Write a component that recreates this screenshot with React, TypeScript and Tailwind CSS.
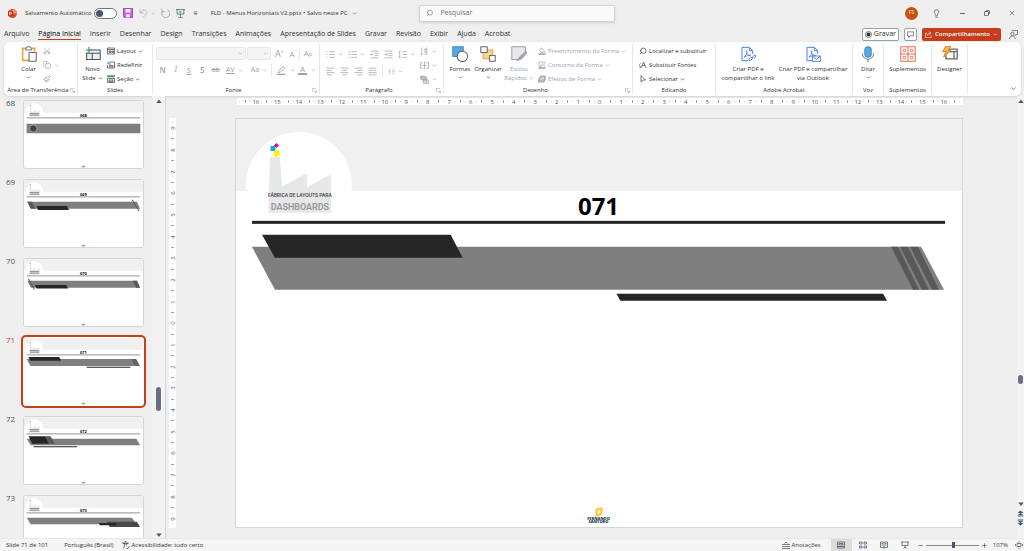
import { type ReactNode } from "react";
import {
  ChevronDown,
  Copy,
  Lightbulb,
  Minus,
  Paintbrush,
  Scissors,
  Search,
  X,
} from "lucide-react";
import clsx from "clsx";

type IconProps = { children: ReactNode; className?: string; box?: number };

// Base for the small drawn icons (16 unit grid by default)
function Icon({ children, className = "size-2", box = 16 }: IconProps) {
  return (
    <svg
      viewBox={`0 0 ${box} ${box}`}
      fill="none"
      stroke="currentColor"
      strokeWidth="1.3"
      aria-hidden="true"
      className={clsx("shrink-0", className)}
    >
      {children}
    </svg>
  );
}

function Chevron({ className }: { className?: string }) {
  return (
    <ChevronDown
      className={clsx("size-[5px] shrink-0", className)}
      strokeWidth={3}
    />
  );
}

function Launcher() {
  return (
    <button type="button" aria-label="Mais opções" className="text-gray-500">
      <Icon className="size-[5px]">
        <path d="M1 13V1h12M6 6l8 8M14 8v6H8" />
      </Icon>
    </button>
  );
}

/* ---------- Slides ---------- */

type Shape = { points: string; fill: string };
type Slide = { number: number; shapes: Shape[]; dot?: boolean };

const GRAY = "#7f7f7f";
const DARK = "#262626";
const MID = "#595959";

const slides: Slide[] = [
  {
    number: 68,
    dot: true,
    shapes: [{ points: "16,139 711,139 711,197 16,197", fill: GRAY }],
  },
  {
    number: 69,
    shapes: [
      { points: "20,133 690,133 709,176 42,176", fill: GRAY },
      { points: "20,133 48,133 70,176 42,176", fill: MID },
      { points: "75,159 262,159 275,184 86,184", fill: DARK },
      { points: "658,120 665,120 706,190 699,190", fill: MID },
    ],
  },
  {
    number: 70,
    shapes: [
      { points: "20,133 690,133 709,176 42,176", fill: GRAY },
      { points: "664,133 690,133 709,176 686,176", fill: MID },
      { points: "67,159 258,159 270,180 76,180", fill: DARK },
      { points: "24,120 31,120 66,187 59,187", fill: MID },
    ],
  },
  {
    number: 71,
    shapes: [
      { points: "16,128 686,128 709,171 39,171", fill: GRAY },
      { points: "656,128 663,128 684,171 678,171", fill: MID },
      { points: "665,128 673,128 694,171 687,171", fill: MID },
      { points: "675,128 683,128 704,171 697,171", fill: MID },
      { points: "26,116 215,116 227,139 39,139", fill: DARK },
      { points: "381,175 648,175 652,182 385,182", fill: DARK },
    ],
  },
  {
    number: 72,
    shapes: [
      { points: "17,133 687,133 709,173 40,173", fill: GRAY },
      { points: "130,118 162,118 188,163 152,163", fill: MID },
      { points: "28,118 130,118 152,163 50,163", fill: DARK },
      { points: "57,178 322,178 327,185 61,185", fill: DARK },
    ],
  },
  {
    number: 73,
    shapes: [
      { points: "17,133 660,133 686,173 40,173", fill: GRAY },
      { points: "506,158 690,158 709,190 524,190", fill: "#4a4a4a" },
      { points: "457,165 560,165 567,178 463,178", fill: DARK },
    ],
  },
];

function SlideArt({ slide, thumb }: { slide: Slide; thumb?: boolean }) {
  return (
    <svg
      viewBox="0 0 727 409"
      className="block w-full bg-white"
      role="img"
      aria-label={`Slide ${slide.number}`}
    >
      <rect width="727" height="72" fill="#f0f0f0" />
      <circle cx="63" cy="66" r="53" fill="#fff" />

      {/* fábrica */}
      <path
        d="M34 38h10l2 30 25-14v14.500l24-13.500V94H32.500z"
        fill="#e6e7e8"
      />
      <rect x="34.500" y="27" width="5" height="5" fill="#00aeef" />
      <path d="M40.500 24l2.500 2.500-2.500 2.500-2.500-2.500z" fill="#ec008c" />
      <path d="M39 31l4 1 1 4-4 2.500-3-3.500z" fill="#fff200" />
      {thumb ? (
        <>
          <path d="M35 77h58" stroke="#777" strokeWidth="5" />
          <path d="M35 87h58" stroke="#aaa" strokeWidth="9" />
        </>
      ) : (
        <>
          <text
            x="64"
            y="78"
            textAnchor="middle"
            fill="#414042"
            className="font-['Roboto',sans-serif] text-[5px] font-medium"
          >
            FÁBRICA DE LAYOUTS PARA
          </text>
          <text
            x="64"
            y="91"
            textAnchor="middle"
            fill="#939598"
            className="font-['Roboto',sans-serif] text-[9px] font-semibold"
          >
            DASHBOARDS
          </text>
        </>
      )}

      <text
        x="363"
        y="96"
        textAnchor="middle"
        fill="#000"
        className="font-['Open_Sans',sans-serif] text-[24px] font-bold"
      >
        {String(slide.number).padStart(3, "0")}
      </text>
      <rect x="16" y="102" width="694" height="3" fill={DARK} />

      {slide.shapes.map((shape) => (
        <polygon key={shape.points} points={shape.points} fill={shape.fill} />
      ))}
      {slide.dot && (
        <circle cx="57" cy="168" r="22" fill="#404040" stroke="#bfbfbf" strokeWidth="4" />
      )}

      {/* rodapé */}
      <path d="M361 392q0-2 5-2v3q0 4-5 4z" fill="#fff3c4" stroke="#fdc52f" strokeWidth="2" />
      {thumb ? (
        <path d="M352 402h22" stroke="#6b8795" strokeWidth="7" />
      ) : (
        <>
          <text
            x="363"
            y="402"
            textAnchor="middle"
            fill="#1d4257"
            className="font-['Open_Sans',sans-serif] text-[4px] font-extrabold"
          >
            FERNANDO
          </text>
          <text
            x="363"
            y="405"
            textAnchor="middle"
            fill="#1d4257"
            className="font-['Open_Sans',sans-serif] text-[4px] font-extrabold"
          >
            SANTORO
          </text>
        </>
      )}
    </svg>
  );
}

/* ---------- Title bar ---------- */

function TitleBar() {
  return (
    <header className="grid h-[26px] grid-cols-[419fr_196fr_409fr] items-center">
      <div className="flex items-center pl-2 whitespace-nowrap">
        <Icon className="size-[9px]">
          <circle cx="8" cy="8" r="8" fill="#d35230" stroke="none" />
          <path d="M8 0a8 8 0 018 8H8z" fill="#ff8f6b" stroke="none" />
          <rect x="0" y="4" width="9" height="9" rx="1" fill="#b7351a" stroke="none" />
          <path d="M3 11V6h2a1.500 1.500 0 010 3H3" stroke="#fff" />
        </Icon>
        <label className="ml-2 flex items-center gap-[2px] text-[6px]">
          Salvamento Automático
          <input type="checkbox" role="switch" className="peer sr-only" />
          <span className="flex h-[11px] w-[23px] items-center rounded-full border border-gray-500 bg-white px-px">
            <span className="size-[7px] rounded-full bg-gray-600" />
          </span>
        </label>
        <button type="button" aria-label="Salvar" className="ml-[6px] text-[#b14fc5]">
          <Icon className="size-[10px]">
            <path d="M1 1h14v14H3l-2-2z" fill="#c56fd5" strokeWidth="2" />
            <path d="M4 1.500h8V7H4zM5 10h6v5H5z" fill="#f6e8f8" stroke="none" />
          </Icon>
        </button>
        <button type="button" aria-label="Desfazer" className="ml-[6px] flex items-center gap-[3px] text-gray-400">
          <Icon className="size-[9px]">
            <path d="M2 1v6h6M2 7l4-4c3-3 8-1 8 3 0 2-1 3-7 9" />
          </Icon>
          <Chevron />
        </button>
        <button type="button" aria-label="Refazer" className="ml-1 text-gray-400">
          <Icon className="size-[10px]">
            <path d="M3 1v5h5M4 5A6.500 6.500 0 1012 3" />
          </Icon>
        </button>
        <button type="button" aria-label="Apresentar" className="ml-[6px] text-gray-600">
          <Icon className="size-[9px]">
            <path d="M0 1h16M2 1v8h12V1M8 9v5M4 15h8" />
            <path d="M6 3l5 2-5 3z" fill="#4caf72" stroke="none" />
          </Icon>
        </button>
        <button type="button" aria-label="Personalizar" className="ml-2 text-gray-600">
          <Icon className="size-[5px]">
            <path d="M2 3h12M3 8h10l-5 5z" strokeWidth="2" />
          </Icon>
        </button>
        <button type="button" className="ml-[13px] flex items-center gap-1 text-[6px]">
          FLD - Menus Horizontais V2.pptx • Salvo neste PC
          <Chevron className="text-gray-600" />
        </button>
      </div>

      <label className="flex h-[17px] items-center gap-[7px] rounded-xs border border-gray-300 bg-[#fafafa] px-[6px] shadow-sm">
        <Search className="size-2 -scale-x-100 text-gray-500" />
        <input
          type="search"
          aria-label="Pesquisar"
          placeholder="Pesquisar"
          className="w-full min-w-0 bg-transparent text-[7px] outline-none placeholder:text-gray-500"
        />
      </label>

      <div className="flex items-center justify-end pr-2">
        <button type="button" className="size-[13px] rounded-full bg-[#ca5010] text-[5px] text-orange-100">
          FS
        </button>
        <button type="button" aria-label="Dicas" className="ml-[14px] text-gray-600">
          <Lightbulb className="size-[9px]" />
        </button>
        <button type="button" aria-label="Minimizar" className="ml-[18px] text-gray-600">
          <Minus className="size-[7px]" strokeWidth={3} />
        </button>
        <button type="button" aria-label="Restaurar" className="ml-[18px] text-gray-700">
          <Icon className="size-[6px]">
            <rect x="1" y="4" width="11" height="11" rx="2" strokeWidth="2" />
            <path d="M5 1h7q3 0 3 3v7" strokeWidth="2" />
          </Icon>
        </button>
        <button type="button" aria-label="Fechar" className="ml-[18px] text-gray-600">
          <X className="size-2" />
        </button>
      </div>
    </header>
  );
}

const tabs = [
  "Arquivo",
  "Página Inicial",
  "Inserir",
  "Desenhar",
  "Design",
  "Transições",
  "Animações",
  "Apresentação de Slides",
  "Gravar",
  "Revisão",
  "Exibir",
  "Ajuda",
  "Acrobat",
];

function TabBar() {
  return (
    <nav className="flex h-4 items-center justify-between pr-[6px] pl-1 text-[7px]">
      <div className="flex gap-[9px]">
        {tabs.map((tab) => (
          <button
            key={tab}
            type="button"
            className={clsx(
              "border-b leading-[10px] whitespace-nowrap",
              tab === "Página Inicial"
                ? "border-[#c43e1c] font-medium text-black"
                : "border-transparent",
            )}
          >
            {tab}
          </button>
        ))}
      </div>
      <div className="flex items-center gap-[5px]">
        <button type="button" className="flex h-[13px] items-center gap-[2px] rounded-xs border border-gray-400 bg-white px-[2px]">
          <Icon className="size-[7px]">
            <circle cx="8" cy="8" r="7" />
            <circle cx="8" cy="8" r="4" fill="currentColor" />
          </Icon>
          Gravar
        </button>
        <button type="button" aria-label="Comentários" className="flex h-[13px] w-[13px] items-center justify-center rounded-xs border border-gray-400 bg-white">
          <Icon className="size-[7px]">
            <path d="M1 2h14v9H7l-3 4v-4H1z" />
          </Icon>
        </button>
        <button type="button" className="flex h-[13px] items-center gap-[3px] rounded-xs bg-[#c43e1c] px-[3px] text-[6px] font-semibold text-white">
          <Icon className="size-[7px]">
            <path d="M5 5H1v10h13v-5M5 11c0-4 3-6 7-6M9 1l5 4-5 4" />
          </Icon>
          Compartilhamento
          <Chevron />
        </button>
        <button type="button" aria-label="Comentar" className="ml-[3px] text-gray-600">
          <Icon className="size-[9px]">
            <circle cx="6" cy="7" r="3" />
            <path d="M1 16c0-7 10-7 10 0M5 1h10v7h-2l-2 2V8" />
          </Icon>
        </button>
      </div>
    </nav>
  );
}

/* ---------- Ribbon ---------- */

type GroupProps = {
  label: string;
  width: string;
  launcher?: boolean;
  children: ReactNode;
};

function Group({ label, width, launcher, children }: GroupProps) {
  return (
    <section className={clsx("flex shrink-0 flex-col border-r border-gray-200", width)}>
      <div className="flex flex-1 items-start">{children}</div>
      <div className="flex h-2 items-center justify-end px-[2px] text-[6px]">
        <span className="flex-1 text-center leading-2 whitespace-nowrap">{label}</span>
        {launcher && <Launcher />}
      </div>
    </section>
  );
}

type BigButtonProps = {
  icon: ReactNode;
  lines: string[];
  chevron?: "below" | "inline";
  disabled?: boolean;
  className?: string;
};

function BigButton({ icon, lines, chevron, disabled, className }: BigButtonProps) {
  return (
    <button
      type="button"
      disabled={disabled}
      className={clsx(
        "flex flex-col items-center text-[6px] leading-[9px] whitespace-nowrap",
        disabled && "text-gray-400",
        className,
      )}
    >
      <span className="mt-px mb-[3px] flex h-[17px] items-center">{icon}</span>
      {lines.map((line, i) => (
        <span key={line} className="flex items-center gap-[2px]">
          {line}
          {chevron === "inline" && i === lines.length - 1 && <Chevron />}
        </span>
      ))}
      {chevron === "below" && <Chevron className="mt-px" />}
    </button>
  );
}

type RowButtonProps = {
  icon: ReactNode;
  label: string;
  chevron?: boolean;
  disabled?: boolean;
};

function RowButton({ icon, label, chevron, disabled }: RowButtonProps) {
  return (
    <button
      type="button"
      disabled={disabled}
      className={clsx(
        "flex h-[14px] items-center gap-[2px] text-[6px] whitespace-nowrap",
        disabled && "text-gray-400",
      )}
    >
      {icon}
      {label}
      {chevron && <Chevron />}
    </button>
  );
}

function IconButton({
  label,
  chevron,
  children,
}: {
  label: string;
  chevron?: boolean;
  children: ReactNode;
}) {
  return (
    <button type="button" disabled aria-label={label} className="flex h-[14px] items-center justify-center gap-[3px]">
      {children}
      {chevron && <Chevron />}
    </button>
  );
}

function Lines({ d }: { d: string }) {
  return (
    <Icon className="size-[9px]">
      <path d={d} />
    </Icon>
  );
}

function PdfIcon({ mail }: { mail?: boolean }) {
  return (
    <Icon className="size-4 text-[#4c82ec]" box={24}>
      <path d="M12 22H3V2h11l5 5v5M14 2v5h5" strokeWidth="1.5" />
      <path d="M6 17c3-2 5-7 4-10-2 3 2 7 6 7-4 0-7 1-10 3z" strokeWidth="1.3" />
      {mail ? (
        <path d="M11 15h12v8H11zl6 5 6-5" fill="#fff" strokeWidth="1.5" />
      ) : (
        <path d="M13 20l3-3q2-1 3 1l-3 4q-3 1-3-2zM18 18l3-4q2-1 3 1l-3 4" strokeWidth="1.5" />
      )}
    </Icon>
  );
}

function FontGroup() {
  return (
    <Group label="Fonte" width="w-[167px]" launcher>
      <div className="w-full px-[3px] pt-[3px] text-gray-400">
        <div className="flex items-center">
          <select disabled aria-label="Fonte" className="h-[13px] w-[90px] appearance-none rounded-xs border border-gray-200 bg-gray-100" />
          <Chevron className="-ml-2" />
          <select disabled aria-label="Tamanho" className="ml-1 h-[13px] w-6 appearance-none rounded-xs border border-gray-200 bg-gray-100" />
          <Chevron className="-ml-2" />
          <button type="button" disabled className="ml-[7px] text-[9px] leading-3">
            A<sup className="text-[5px]">^</sup>
          </button>
          <button type="button" disabled className="ml-[6px] text-[8px] leading-3">
            A<sup className="text-[5px]">ˇ</sup>
          </button>
          <span className="ml-[2px] h-3 w-px bg-gray-200" />
          <button type="button" disabled className="ml-1 text-[8px] leading-3">
            A<span className="text-[6px]">ρ</span>
          </button>
        </div>
        <div className="mt-[3px] flex h-[14px] items-center text-[8px]">
          <button type="button" disabled className="w-[14px] font-semibold">N</button>
          <button type="button" disabled className="w-[14px] font-serif italic">I</button>
          <button type="button" disabled className="w-[14px] underline">S</button>
          <button type="button" disabled className="w-[14px] font-semibold">S</button>
          <button type="button" disabled className="w-[14px] text-[7px] line-through">ab</button>
          <button type="button" disabled className="ml-1 flex items-center gap-[3px] text-[7px] underline">
            AV
            <Chevron />
          </button>
          <button type="button" disabled className="ml-2 flex items-center gap-[3px] text-[7px]">
            Aa
            <Chevron />
          </button>
          <span className="ml-1 h-3 w-px bg-gray-200" />
          <button type="button" disabled aria-label="Realce" className="ml-1 flex items-center gap-1">
            <Icon className="size-[10px]">
              <path d="M4 10l7-8 3 3-8 7H3z" />
              <path d="M1 15h14" strokeWidth="2" />
            </Icon>
            <Chevron />
          </button>
          <button type="button" disabled className="ml-[3px] flex items-center gap-1">
            <span className="w-[9px] border-b-2 border-gray-400 text-center leading-2">A</span>
            <Chevron />
          </button>
        </div>
      </div>
    </Group>
  );
}

function ParagraphGroup() {
  return (
    <Group label="Parágrafo" width="w-[124px]" launcher>
      <div className="flex w-full justify-between pr-[6px] pl-[6px] text-gray-400">
        <div className="pt-[3px]">
          <div className="flex items-center gap-[5px]">
            <IconButton label="Marcadores" chevron>
              <Lines d="M1 3h2M6 3h10M1 8h2M6 8h10M1 13h2M6 13h10" />
            </IconButton>
            <IconButton label="Numeração" chevron>
              <Lines d="M2 1v4M6 3h10M1 8h3M6 8h10M1 13h3M6 13h10" />
            </IconButton>
            <IconButton label="Diminuir recuo">
              <Lines d="M1 2h14M8 6h7M8 10h7M1 14h14M6 8H1M3 6L1 8l2 2" />
            </IconButton>
            <IconButton label="Aumentar recuo">
              <Lines d="M1 2h14M8 6h7M8 10h7M1 14h14M1 8h5M4 6l2 2-2 2" />
            </IconButton>
            <IconButton label="Espaçamento" chevron>
              <Lines d="M3 2v12M1 4l2-2 2 2M1 12l2 2 2-2M8 3h8M8 8h8M8 13h8" />
            </IconButton>
          </div>
          <div className="mt-[3px] flex items-center gap-[5px]">
            <IconButton label="Esquerda">
              <Lines d="M1 2h14M1 6h9M1 10h14M1 14h9" />
            </IconButton>
            <IconButton label="Centro">
              <Lines d="M1 2h14M4 6h8M1 10h14M4 14h8" />
            </IconButton>
            <IconButton label="Direita">
              <Lines d="M1 2h14M6 6h9M1 10h14M6 14h9" />
            </IconButton>
            <IconButton label="Justificar">
              <Lines d="M1 2h14M1 6h14M1 10h14M1 14h14" />
            </IconButton>
            <span className="h-3 w-px bg-gray-200" />
            <IconButton label="Colunas" chevron>
              <Icon className="size-[7px]">
                <path d="M1 4h5M1 8h5M1 12h5M10 4h5M10 8h5M10 12h5" />
              </Icon>
            </IconButton>
          </div>
        </div>
        <div>
          <IconButton label="Direção do texto" chevron>
            <Lines d="M3 1v13M1 12l2 2 2-2M9 14V3M12 1v13M7 5l2-2 2 2" />
          </IconButton>
          <IconButton label="Alinhar texto" chevron>
            <Lines d="M5 3H1v10h4M11 3h4v10h-4M8 1v14M4 8h8" />
          </IconButton>
          <IconButton label="SmartArt" chevron>
            <Icon className="size-[9px]">
              <path d="M1 2h8l3 3v4H4L1 7z" fill="#bbb" />
              <path d="M6 9h9v6H6zM8 11h5M8 13h5" />
            </Icon>
          </IconButton>
        </div>
      </div>
    </Group>
  );
}

function Ribbon() {
  return (
    <div className="mr-[3px] ml-1 flex h-[54px] rounded-md bg-white py-[2px] shadow-sm">
      <Group label="Área de Transferência" width="w-[74px]" launcher>
        <BigButton
          className="w-[49px]"
          lines={["Colar"]}
          chevron="below"
          icon={
            <Icon className="size-4" box={20}>
              <path d="M6 3H2v15h8M13 3h4v4" stroke="#e8a33d" strokeWidth="2" />
              <path d="M6 5V3l2-2h3l2 2v2z" stroke="#777" fill="#fff" />
              <path d="M10 8h9v11h-9z" stroke="#666" fill="#fff" />
            </Icon>
          }
        />
        <div className="-ml-[10px] text-gray-400">
          <IconButton label="Recortar">
            <Scissors className="size-2 -rotate-90" />
          </IconButton>
          <IconButton label="Copiar" chevron>
            <Copy className="size-2" />
          </IconButton>
          <IconButton label="Pincel de formatação">
            <Paintbrush className="size-2" />
          </IconButton>
        </div>
      </Group>

      <Group label="Slides" width="w-[75px]">
        <BigButton
          className="w-[29px]"
          lines={["Novo", "Slide"]}
          chevron="inline"
          icon={
            <Icon className="size-4 text-gray-600" box={20}>
              <path d="M3 5h16v12H2V8M2 9h17M9 9v8" fill="#eee" />
              <path d="M5 1v8M1 5h8" stroke="#43a668" strokeWidth="1.5" />
            </Icon>
          }
        />
        <div>
          <RowButton
            label="Layout"
            chevron
            icon={
              <Icon>
                <path d="M1 2h14v12H1zM1 5h14M4 8h4v3H4zM10 8h3v3h-3z" />
              </Icon>
            }
          />
          <RowButton
            label="Redefinir"
            icon={
              <Icon>
                <path d="M6 2h9v12H1V8M5 9h7v3H5z" />
                <path d="M4 1L1 4l3 3M1 4h5v4" stroke="#2b88d8" strokeWidth="1.600" />
              </Icon>
            }
          />
          <RowButton
            label="Seção"
            chevron
            icon={
              <Icon>
                <path d="M1 1h14v3H1z" fill="#43a668" stroke="#43a668" />
                <path d="M1 7h14v8H1zM4 10h8v3H4z" />
              </Icon>
            }
          />
        </div>
      </Group>

      <FontGroup />
      <ParagraphGroup />

      <Group label="Desenho" width="w-[189px]" launcher>
        <BigButton
          className="w-8"
          lines={["Formas"]}
          chevron="below"
          icon={
            <Icon className="size-4" box={20}>
              <path d="M1 1h13v12H1z" fill="#5ba7e5" stroke="#3b8ad0" />
              <circle cx="13" cy="13" r="6.500" fill="#fff" stroke="#666" />
            </Icon>
          }
        />
        <BigButton
          className="w-6"
          lines={["Organizar"]}
          chevron="below"
          icon={
            <Icon className="size-4" box={20}>
              <path d="M4 5h12v11H4z" fill="#fbd78b" stroke="#e8a33d" />
              <path d="M1 1h8v7H1zM12 12h7v7h-7z" fill="#fff" stroke="#666" />
            </Icon>
          }
        />
        <BigButton
          className="w-[38px]"
          lines={["Estilos", "Rápidos"]}
          chevron="inline"
          disabled
          icon={
            <Icon className="size-4" box={20}>
              <path d="M1 1h17v7l-8 9H1z" fill="#e8e8e8" />
              <path d="M19 6l-8 8-3 4 5-2 7-8" fill="#aaa" />
            </Icon>
          }
        />
        <div>
          <RowButton
            label="Preenchimento da Forma"
            chevron
            disabled
            icon={
              <Icon>
                <path d="M7 2l6 6-5 4-5-5zM7 1v4M13 8l2 4" />
                <path d="M1 14h14" strokeWidth="3" />
              </Icon>
            }
          />
          <RowButton
            label="Contorno da Forma"
            chevron
            disabled
            icon={
              <Icon>
                <path d="M10 2H2v9h3M5 11l1-3 7-7 2 2-7 7zM13 7v4" />
                <path d="M1 14h14" strokeWidth="3" />
              </Icon>
            }
          />
          <RowButton
            label="Efeitos de Forma"
            chevron
            disabled
            icon={
              <Icon>
                <path d="M5 2h10l-3 8H1zM1 10v4h11l3-8" fill="#ccc" strokeWidth="2" />
              </Icon>
            }
          />
        </div>
      </Group>

      <Group label="Editando" width="w-[83px]">
        <div className="pl-[6px]">
          <RowButton
            label="Localizar e substituir"
            icon={<Search className="size-2 -scale-x-100" />}
          />
          <RowButton
            label="Substituir Fontes"
            icon={
              <Icon>
                <path d="M5 12l4-10 5 12M7 9h5" />
                <path d="M4 4C0 6 0 11 4 13M1 13h3v-3" stroke="#2b88d8" strokeWidth="1.600" />
              </Icon>
            }
          />
          <RowButton
            label="Selecionar"
            chevron
            icon={
              <Icon>
                <path d="M4 1v13l4-4h5z" />
              </Icon>
            }
          />
        </div>
      </Group>

      <Group label="Adobe Acrobat" width="w-[137px]">
        <BigButton
          className="w-16"
          lines={["Criar PDF e", "compartilhar o link"]}
          icon={<PdfIcon />}
        />
        <BigButton
          className="w-[66px]"
          lines={["Criar PDF e compartilhar", "via Outlook"]}
          icon={<PdfIcon mail />}
        />
      </Group>

      <Group label="Voz" width="w-[31px]">
        <BigButton
          className="w-full"
          lines={["Ditar"]}
          chevron="below"
          icon={
            <Icon className="size-4" box={20}>
              <rect x="6" y="1" width="8" height="13" rx="4" fill="#5ba7e5" stroke="#3b8ad0" />
              <path d="M3 9c0 10 14 10 14 0M10 16v4" stroke="#777" />
            </Icon>
          }
        />
      </Group>

      <Group label="Suplementos" width="w-[48px]">
        <BigButton
          className="w-full"
          lines={["Suplementos"]}
          icon={
            <Icon className="size-4 text-[#e0704f]" box={20}>
              <path d="M1 1h18v18H1zM10 1v18M1 10h18" />
              <path d="M4 4h3v3H4zM13 4h3v3h-3zM4 13h3v3H4zM13 13h3v3h-3z" strokeWidth="1" />
            </Icon>
          }
        />
      </Group>

      <Group label="" width="w-[36px]">
        <BigButton
          className="w-full"
          lines={["Designer"]}
          icon={
            <Icon className="size-4" box={20}>
              <path d="M6 4h13v12H5v-4M6 7h13M15 7v9" stroke="#666" strokeWidth="1.600" />
              <path d="M5 0h6L8 5h3l-9 9 3-7H1z" fill="#f9b84a" stroke="#d9822b" />
            </Icon>
          }
        />
      </Group>

      <button type="button" aria-label="Recolher faixa" className="mr-1 mb-[2px] ml-auto self-end">
        <ChevronDown className="size-[7px]" />
      </button>
    </div>
  );
}

/* ---------- Rulers ---------- */

// Quarter marks between numbers: dot, tick, dot
function rulerMarks(max: number, edge: string[]) {
  const marks: string[] = [...edge];
  for (let n = -max; n <= max; n++) {
    marks.push(String(Math.abs(n)));
    if (n < max) marks.push(".", "|", ".");
  }
  return [...marks, ...edge];
}

function Ruler({ vertical }: { vertical?: boolean }) {
  const marks = vertical ? rulerMarks(9, ["."]) : rulerMarks(16, [".", "|", "."]);
  return (
    <div
      className={clsx(
        "flex bg-white text-[6px] leading-none text-gray-600",
        vertical ? "w-[7px] flex-col py-[2px]" : "h-[7px] w-full",
      )}
    >
      {marks.map((mark, i) => (
        <span key={i} className="flex min-h-0 min-w-0 flex-1 items-center justify-center">
          {mark === "." && <span className="size-px bg-gray-300" />}
          {mark === "|" && (
            <span className={clsx("bg-gray-400", vertical ? "h-px w-[3px]" : "h-[3px] w-px")} />
          )}
          {mark !== "." && mark !== "|" && (
            <span className={clsx(vertical && "-rotate-90")}>{mark}</span>
          )}
        </span>
      ))}
    </div>
  );
}

function Triangle({ down }: { down?: boolean }) {
  return (
    <Icon className="size-[6px] text-gray-600">
      <path d={down ? "M1 4h14l-7 9z" : "M1 13h14L8 4z"} fill="currentColor" stroke="none" />
    </Icon>
  );
}

function DoubleTriangle({ down }: { down?: boolean }) {
  return (
    <Icon className="size-[7px] text-gray-600">
      <path
        d={down ? "M2 1h12v2H2zM1 4h14l-7 5zM1 9h14l-7 6z" : "M1 7h14L8 1zM1 12h14L8 7zM2 13h12v2H2z"}
        fill="currentColor"
        stroke="none"
      />
    </Icon>
  );
}

/* ---------- Panels ---------- */

function ThumbnailPanel({ current }: { current: number }) {
  return (
    <aside className="flex w-[166px] shrink-0 border-r border-gray-300">
      <ol className="flex-1 overflow-hidden pt-1">
        {slides.map((slide) => {
          const active = slide.number === current;
          return (
            <li key={slide.number} className="flex h-[79px] items-start">
              <span
                className={clsx(
                  "w-[23px] pl-[6px] text-[8px] leading-[5px]",
                  active ? "text-[#c43e1c]" : "text-gray-600",
                )}
              >
                {slide.number}
              </span>
              <button
                type="button"
                className={clsx(
                  "w-[121px] overflow-hidden rounded-[3px] border",
                  active
                    ? "border-white outline-2 outline-[#c43e1c]"
                    : "border-gray-300",
                )}
              >
                <SlideArt slide={slide} thumb />
              </button>
            </li>
          );
        })}
      </ol>
      <div className="flex w-[13px] flex-col items-center bg-[#f3f3f3] pt-[2px]">
        <Triangle />
        <div className="flex-[281]" />
        <div className="h-6 w-[5px] rounded-full bg-gray-500" />
        <div className="flex-[120]" />
        <Triangle down />
      </div>
    </aside>
  );
}

function Editor({ slide }: { slide: Slide }) {
  return (
    <main className="flex min-w-0 flex-1">
      <div className="min-w-0 flex-1 pl-[3px]">
        <div className="pt-[2px] pr-[54px] pl-[68px]">
          <Ruler />
        </div>
        <div className="flex pt-[13px] pr-[54px]">
          <Ruler vertical />
          <div className="ml-[59px] min-w-0 flex-1 border border-gray-300">
            <SlideArt slide={slide} />
          </div>
        </div>
      </div>
      <div className="flex w-[7px] flex-col items-center bg-[#f3f3f3] pt-[2px] pb-3">
        <Triangle />
        <div className="flex-[271]" />
        <div className="h-[9px] w-[5px] rounded-full bg-gray-500" />
        <div className="flex-[117]" />
        <Triangle down />
        <div className="mt-[3px] flex flex-col gap-[2px]">
          <DoubleTriangle />
          <DoubleTriangle down />
        </div>
      </div>
    </main>
  );
}

function StatusBar() {
  return (
    <footer className="flex h-[13px] items-center justify-between border-t border-gray-200 bg-[#f5f5f5] pr-[1px] pl-[6px] text-[6px] whitespace-nowrap">
      <div className="flex items-center">
        <span>Slide 71 de 101</span>
        <button type="button" className="ml-4">Português (Brasil)</button>
        <button type="button" className="ml-2 flex items-center gap-[2px]">
          <Icon>
            <circle cx="7" cy="2" r="1.500" />
            <path d="M1 4l4 1v5l-2 5M13 4L9 5v4M1 4q6 3 12 0M9 14l2 2 4-6" />
          </Icon>
          Acessibilidade: tudo certo
        </button>
      </div>
      <div className="flex items-center text-gray-700">
        <button type="button" className="flex items-center gap-px">
          <Icon>
            <path d="M5 5l3-3 3 3M0 7h16M0 11h16M0 15h16" />
          </Icon>
          Anotações
        </button>
        <button type="button" aria-label="Normal" className="ml-[10px] flex h-3 w-[21px] items-center justify-center bg-[#dcdcdc]">
          <Icon>
            <path d="M1 2h14v12H1zM1 11h14M4 5h8v3H4z" />
          </Icon>
        </button>
        <button type="button" aria-label="Classificação" className="ml-[7px]">
          <Icon>
            <path d="M1 2h5v4H1zM10 2h5v4h-5zM1 10h5v4H1zM10 10h5v4h-5z" />
          </Icon>
        </button>
        <button type="button" aria-label="Leitura" className="ml-[13px]">
          <Icon>
            <path d="M8 3v12M1 2h5l2 1 2-1h5v11h-5l-2 1-2-1H1zM3 5h3M3 8h3M10 5h3M10 8h3" />
          </Icon>
        </button>
        <button type="button" aria-label="Apresentação" className="ml-[13px]">
          <Icon>
            <path d="M0 2h16M2 2v7h12V2M8 9v5M5 15l3-3 3 3" />
          </Icon>
        </button>
        <button type="button" aria-label="Menos zoom" className="ml-[9px]">
          <Icon className="size-[5px]">
            <path d="M1 8h14" strokeWidth="2" />
          </Icon>
        </button>
        <input
          type="range"
          aria-label="Zoom"
          defaultValue={52}
          className="mx-[3px] h-[6px] w-[53px] appearance-none bg-[linear-gradient(#888,#888)] bg-[length:100%_1px] bg-center bg-no-repeat [&::-webkit-slider-thumb]:h-[6px] [&::-webkit-slider-thumb]:w-[3px] [&::-webkit-slider-thumb]:appearance-none [&::-webkit-slider-thumb]:bg-gray-600"
        />
        <button type="button" aria-label="Mais zoom">
          <Icon className="size-[5px]">
            <path d="M1 8h14M8 1v14" strokeWidth="2" />
          </Icon>
        </button>
        <button type="button" className="ml-[6px]">107%</button>
        <button type="button" aria-label="Ajustar" className="ml-[7px]">
          <Icon>
            <path d="M4 5h8v6H4zM6 3l2-2 2 2M6 13l2 2 2-2M2 6L0 8l2 2M14 6l2 2-2 2" />
          </Icon>
        </button>
      </div>
    </footer>
  );
}

export default function App() {
  const current = slides[3];
  return (
    <div className="flex h-screen flex-col overflow-hidden bg-[#efefef] font-['Open_Sans','Noto_Sans',sans-serif] text-[#303030]">
      <TitleBar />
      <TabBar />
      <Ribbon />
      <div className="flex min-h-0 flex-1">
        <ThumbnailPanel current={current.number} />
        <Editor slide={current} />
      </div>
      <StatusBar />
    </div>
  );
}
